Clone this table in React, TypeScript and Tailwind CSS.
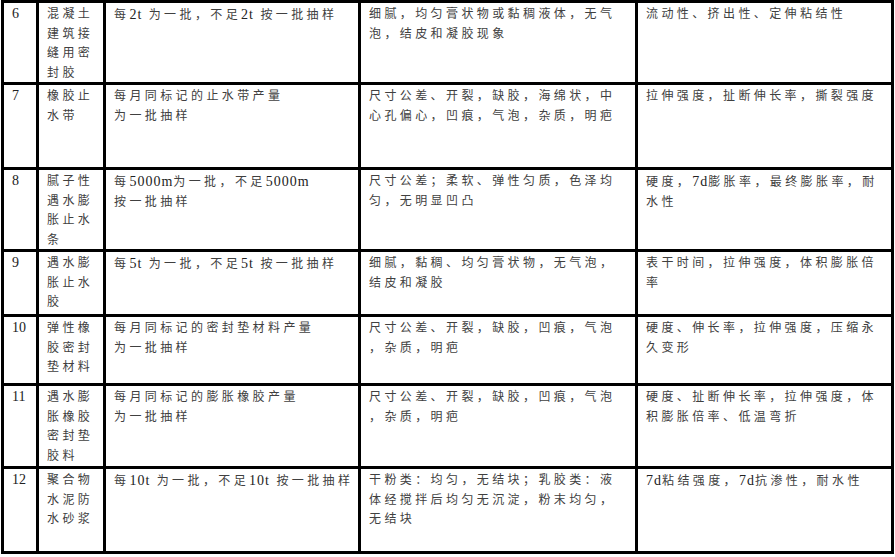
interface Row {
  no: string;
  name: string[];
  batch: string[];
  look: string[];
  tests: string[];
}

const rows: Row[] = [
  {
    no: "6",
    name: ["混凝土", "建筑接", "缝用密", "封胶"],
    batch: ["每2t 为一批，不足2t 按一批抽样"],
    look: ["细腻，均匀膏状物或黏稠液体，无气", "泡，结皮和凝胶现象"],
    tests: ["流动性、挤出性、定伸粘结性"],
  },
  {
    no: "7",
    name: ["橡胶止", "水带"],
    batch: ["每月同标记的止水带产量", "为一批抽样"],
    look: ["尺寸公差、开裂，缺胶，海绵状，中", "心孔偏心，凹痕，气泡，杂质，明疤"],
    tests: ["拉伸强度，扯断伸长率，撕裂强度"],
  },
  {
    no: "8",
    name: ["腻子性", "遇水膨", "胀止水", "条"],
    batch: ["每5000m为一批，不足5000m", "按一批抽样"],
    look: ["尺寸公差；柔软、弹性匀质，色泽均", "匀，无明显凹凸"],
    tests: ["硬度，7d膨胀率，最终膨胀率，耐", "水性"],
  },
  {
    no: "9",
    name: ["遇水膨", "胀止水", "胶"],
    batch: ["每5t 为一批，不足5t 按一批抽样"],
    look: ["细腻，黏稠、均匀膏状物，无气泡，", "结皮和凝胶"],
    tests: ["表干时间，拉伸强度，体积膨胀倍", "率"],
  },
  {
    no: "10",
    name: ["弹性橡", "胶密封", "垫材料"],
    batch: ["每月同标记的密封垫材料产量", "为一批抽样"],
    look: ["尺寸公差、开裂，缺胶，凹痕，气泡", "，杂质，明疤"],
    tests: ["硬度、伸长率，拉伸强度，压缩永", "久变形"],
  },
  {
    no: "11",
    name: ["遇水膨", "胀橡胶", "密封垫", "胶料"],
    batch: ["每月同标记的膨胀橡胶产量", "为一批抽样"],
    look: ["尺寸公差、开裂，缺胶，凹痕，气泡", "，杂质，明疤"],
    tests: ["硬度、扯断伸长率，拉伸强度，体", "积膨胀倍率、低温弯折"],
  },
  {
    no: "12",
    name: ["聚合物", "水泥防", "水砂浆"],
    batch: ["每10t 为一批，不足10t 按一批抽样"],
    look: [
      "干粉类：均匀，无结块；乳胶类：液",
      "体经搅拌后均匀无沉淀，粉末均匀，",
      "无结块",
    ],
    tests: ["7d粘结强度，7d抗渗性，耐水性"],
  },
];

// latin runs are set a bit larger, like Times in the source document
function Line({ text }: { text: string }) {
  const parts = text.split(/([A-Za-z0-9]+)/);
  return (
    <div className="whitespace-nowrap">
      {parts.map((p, i) =>
        /^[A-Za-z0-9]+$/.test(p) ? (
          <span key={i} className="text-[14px] tracking-[1px] text-[#222]">
            {p}
          </span>
        ) : (
          <span key={i}>{p}</span>
        )
      )}
    </div>
  );
}

function Cell({ lines }: { lines: string[] }) {
  return (
    <div className="bg-white pl-[8px] pt-[2px] overflow-hidden">
      {lines.map((l, i) => (
        <Line key={i} text={l} />
      ))}
    </div>
  );
}

export default function App() {
  return (
    <div className="bg-white w-[895px] h-[557px]">
      <div
        className="ml-[1px] w-fit grid grid-cols-[32px_64px_252px_274px_253px] grid-rows-[79px_82px_79px_62px_66px_80px_82px] gap-[3px] p-[3px] bg-black text-[12px] leading-[19.5px] tracking-[3.4px] text-[#404040]"
        style={{ fontFamily: '"Liberation Serif", "Noto Sans CJK SC", serif' }}
      >
        {rows.map((r) => (
          <div key={r.no} className="contents">
            <div className="bg-white pl-[8px] pt-[1px] tracking-[0px] text-[14px] text-[#222]">
              {r.no}
            </div>
            <Cell lines={r.name} />
            <Cell lines={r.batch} />
            <Cell lines={r.look} />
            <Cell lines={r.tests} />
          </div>
        ))}
      </div>
    </div>
  );
}
